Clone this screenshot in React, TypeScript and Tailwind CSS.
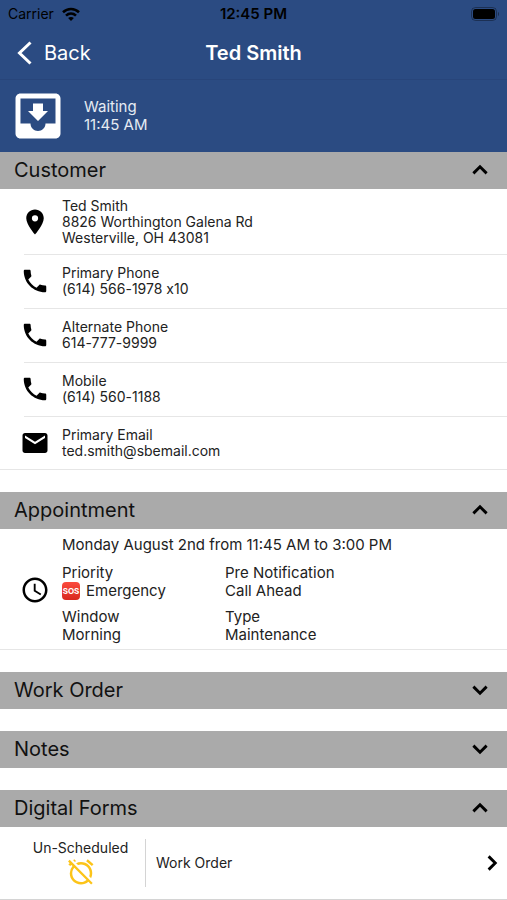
import { useState, type ReactNode } from "react";
import type { IconType } from "react-icons";
import { MdAccessTime, MdAlarmOff, MdEmail, MdMoveToInbox, MdPhone, MdPlace } from "react-icons/md";

const chevronPaths = {
  up: "M6.700 14.700 12 9.400l5.300 5.300",
  down: "M6.700 9.300 12 14.600l5.300-5.300",
  right: "M9.300 6.700 14.600 12l-5.300 5.300",
};

function Chevron({ direction }: { direction: keyof typeof chevronPaths }) {
  return (
    <svg viewBox="0 0 24 24" className="size-[30px] text-black" fill="none" stroke="currentColor" strokeWidth="2.3" aria-hidden="true">
      <path d={chevronPaths[direction]} />
    </svg>
  );
}

function StatusBar() {
  return (
    <div className="grid h-7 grid-cols-3 items-center px-2 text-sm text-black">
      <div className="flex items-center gap-2">
        <span>Carrier</span>
        <svg viewBox="0 0 18 14" className="h-3.5 w-[18px]" fill="none" stroke="currentColor" strokeWidth="2.6" aria-hidden="true">
          <path d="M1 5.2C5.6.9 12.4.9 17 5.2" />
          <path d="M4 8.6c2.9-2.7 7.1-2.7 10 0" />
          <path d="M9 14l-2.9-3c1.7-1.5 4.1-1.5 5.8 0z" fill="currentColor" stroke="none" />
        </svg>
      </div>
      <span className="text-center text-[15px] font-semibold">12:45 PM</span>
      <svg viewBox="0 0 28 14" className="h-3.5 w-7 justify-self-end" aria-hidden="true">
        <rect x=".5" y=".5" width="25" height="13" rx="4" fill="none" stroke="#000" strokeOpacity=".35" />
        <rect x="2" y="2" width="22" height="10" rx="2.5" />
        <path d="M27 5c1.2.6 1.2 3.4 0 4z" fillOpacity=".45" />
      </svg>
    </div>
  );
}

function Section({ title, initiallyOpen = false, children }: { title: string; initiallyOpen?: boolean; children?: ReactNode }) {
  const [open, setOpen] = useState(initiallyOpen);
  return (
    <section>
      <h2>
        <button
          type="button"
          aria-expanded={open}
          onClick={() => setOpen(!open)}
          className="flex h-[37px] w-full items-center justify-between bg-[#aaaaaa] pr-3 pb-0.5 pl-3.5 text-left text-xl text-[#111]"
        >
          {title}
          <Chevron direction={open ? "up" : "down"} />
        </button>
      </h2>
      {open && children}
    </section>
  );
}

function ContactRow({ icon: Icon, href, lines }: { icon: IconType; href: string; lines: string[] }) {
  return (
    <li className="group pl-6">
      <a
        href={href}
        className="flex items-center border-b border-[#e6e6e6] pt-2.5 pb-[11px] group-first:pt-[9px] group-first:pb-2 group-last:border-b-0 group-last:pb-2.5"
      >
        <Icon className="-ml-1 size-[30px] shrink-0 text-black" aria-hidden="true" />
        <span className="flex-1 pl-3 [font-feature-settings:'calt'_0]">
          {lines.map((line) => (
            <span key={line} className="block leading-4">
              {line}
            </span>
          ))}
        </span>
      </a>
    </li>
  );
}

function Detail({ label, children }: { label: string; children: ReactNode }) {
  return (
    <div className="leading-[18px]">
      <dt>{label}</dt>
      <dd className="flex items-center gap-1.5">{children}</dd>
    </div>
  );
}

export default function App() {
  return (
    <div className="min-h-screen bg-white font-['Inter','Liberation_Sans',sans-serif] text-sm text-[#222]">
      <header className="bg-[#2b4b82] text-white">
        <StatusBar />
        <nav className="grid h-[52px] grid-cols-3 items-center border-b border-[#28457a] px-4 pb-0.5">
          <button type="button" className="flex items-center gap-3 text-xl">
            <svg viewBox="0 0 16 24" className="h-6 w-4" fill="none" stroke="currentColor" strokeWidth="3" aria-hidden="true">
              <path d="M14.5 1.5 3.5 12l11 10.5" />
            </svg>
            Back
          </button>
          <h1 className="text-center text-xl font-semibold">Ted Smith</h1>
        </nav>
        <div className="flex h-[72px] items-center gap-4 px-2">
          <MdMoveToInbox className="size-[60px]" aria-hidden="true" />
          <p className="text-[15px] leading-[18px] text-[#e6ebf3]">
            Waiting
            <br />
            11:45 AM
          </p>
        </div>
      </header>

      <main className="flex flex-col gap-[22px]">
        <Section title="Customer" initiallyOpen>
          <ul className="border-b border-[#e6e6e6]">
            <ContactRow icon={MdPlace} href="#map" lines={["Ted Smith", "8826 Worthington Galena Rd", "Westerville, OH 43081"]} />
            <ContactRow icon={MdPhone} href="tel:6145661978" lines={["Primary Phone", "(614) 566-1978 x10"]} />
            <ContactRow icon={MdPhone} href="tel:6147779999" lines={["Alternate Phone", "614-777-9999"]} />
            <ContactRow icon={MdPhone} href="tel:6145601188" lines={["Mobile", "(614) 560-1188"]} />
            <ContactRow icon={MdEmail} href="mailto:ted.smith@sbemail.com" lines={["Primary Email", "ted.smith@sbemail.com"]} />
          </ul>
        </Section>

        <Section title="Appointment" initiallyOpen>
          <div className="flex items-center border-b border-[#e6e6e6] pt-[7px] pb-[5px] pl-5 text-[15px]">
            <MdAccessTime className="size-[30px] shrink-0 text-black" aria-hidden="true" />
            <div className="flex-1 pl-3">
              <p className="leading-[18px]">Monday August 2nd from 11:45 AM to 3:00 PM</p>
              <dl className="mt-2.5 grid grid-cols-[163px_1fr] gap-y-2">
                <Detail label="Priority">
                  <span className="flex size-[18px] items-center justify-center rounded-sm bg-linear-to-b from-[#fb4a3d] to-[#d8281f] text-[8px] font-bold text-white">
                    SOS
                  </span>
                  Emergency
                </Detail>
                <Detail label="Pre Notification">Call Ahead</Detail>
                <Detail label="Window">Morning</Detail>
                <Detail label="Type">Maintenance</Detail>
              </dl>
            </div>
          </div>
        </Section>

        <Section title="Work Order" />
        <Section title="Notes" />

        <Section title="Digital Forms" initiallyOpen>
          <a href="#work-order" className="flex h-[73px] items-center border-b border-[#d4d4d4]">
            <span className="flex w-[146px] flex-col items-center border-r border-[#d4d4d4] pl-4">
              <span className="leading-[18px]">Un-Scheduled</span>
              <MdAlarmOff className="size-[30px] text-[#fcc419]" aria-hidden="true" />
            </span>
            <span className="flex-1 pl-2.5">Work Order</span>
            <Chevron direction="right" />
          </a>
        </Section>
      </main>
    </div>
  );
}
